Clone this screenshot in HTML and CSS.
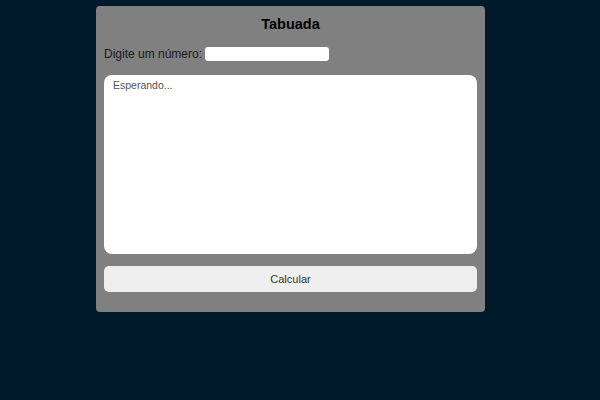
FILE: index.html
```html
<!DOCTYPE html>
<html lang="pt-BR">
<head>
<meta charset="utf-8">
<title>Tabuada</title>
<link rel="stylesheet" href="styles.css">
</head>
<body>
<main class="card">
  <h1 class="title">Tabuada</h1>
  <div class="row">
    <label class="label" for="num">Digite um número:</label>
    <input class="num" id="num" type="number">
  </div>
  <div class="output">Esperando...</div>
  <button class="btn" type="button">Calcular</button>
</main>
</body>
</html>
```
FILE: styles.css
```css
html, body {
  margin: 0;
  padding: 0;
  background: #00192b;
  height: 100%;
}
body {
  font-family: "Liberation Sans", Arial, sans-serif;
}
.card {
  box-sizing: border-box;
  width: 389px;
  height: 306px;
  margin: 6px 0 0 96px;
  padding: 9px 8px 20px;
  background: #808080;
  border-radius: 4px;
  display: flex;
  flex-direction: column;
}
.title {
  margin: 0;
  font-size: 14.5px;
  font-weight: bold;
  text-align: center;
  color: #000;
  line-height: 18px;
}
.row {
  display: flex;
  align-items: center;
  gap: 3px;
  margin-top: 14px;
  height: 14px;
}
.label {
  font-size: 12px;
  color: #1a1a1a;
}
.num {
  box-sizing: border-box;
  width: 124px;
  height: 14px;
  border: none;
  border-radius: 3px;
  background: #fff;
  padding: 0;
  margin: 0;
}
.output {
  box-sizing: border-box;
  margin-top: 14px;
  height: 179px;
  background: #fff;
  border-radius: 8px;
  padding: 4px 9px;
  font-size: 10.5px;
  color: #555;
}
.btn {
  margin-top: 12px;
  height: 26px;
  border: none;
  border-radius: 5px;
  background: #efefef;
  font-family: "Liberation Sans", Arial, sans-serif;
  font-size: 11px;
  color: #333;
  padding: 0;
}
```
